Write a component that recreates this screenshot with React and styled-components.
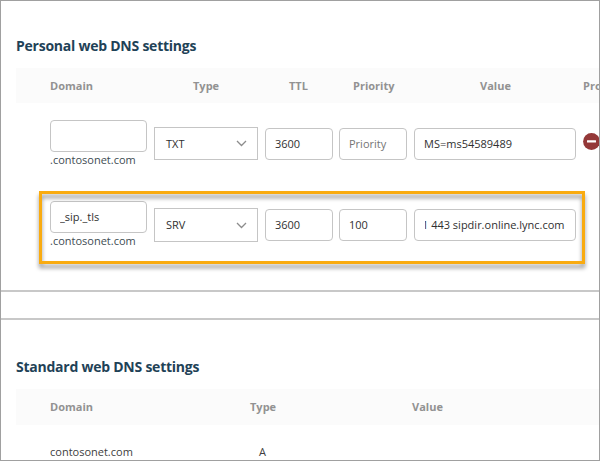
import React from "react";
import styled, { createGlobalStyle } from "styled-components";

const GlobalStyle = createGlobalStyle`
  * { box-sizing: border-box; }
  body { margin: 0; background: #fff; }
`;

const Frame = styled.main`
  width: 600px;
  height: 461px;
  overflow: hidden;
  border: 1px solid #a0a0a0;
  background: #fff;
  color: #404040;
  font: 12px/16px "Open Sans", sans-serif;
`;

const PersonalSection = styled.section`
  position: relative;
  height: 291px;
  padding: 35px 0 0 15px;
  border-bottom: 2px solid #c8c8c8;
`;

const StandardSection = styled.section`
  margin-top: 26px;
  padding: 37px 0 0 15px;
  border-top: 2px solid #c8c8c8;
`;

const Title = styled.h2`
  margin: 0;
  height: 20px;
  color: #1f4257;
  font-size: 14px;
  font-weight: 700;
  line-height: 20px;
  letter-spacing: -0.24px;
  white-space: nowrap;
`;

const Header = styled.div`
  display: grid;
  grid-template-columns: ${(p) => p.$columns};
  align-items: center;
  height: ${(p) => p.$height};
  margin-top: 12px;
  padding-left: 34px;
  background: #fbfbfb;
  color: #929292;
  font-size: 11px;
  font-weight: 700;
  white-space: nowrap;
`;

const RecordRow = styled.div`
  display: grid;
  grid-template-columns: 97px 104px 68px 67px 162px 17px;
  column-gap: 7px;
  align-items: start;
  height: 81px;
  padding-left: 34px;
`;

const Records = styled.div`
  padding-top: 17px;
`;

const DomainCell = styled.div`
  color: #404c52;
  font-size: 11px;
  line-height: 16px;
`;

const Field = styled.input`
  display: block;
  width: ${(p) => p.$width || "100%"};
  height: 32px;
  margin-top: ${(p) => p.$drop || "0"};
  margin-left: ${(p) => p.$shift || "0"};
  padding: 0 9px 2px;
  border: 1px solid #c5c5c5;
  border-radius: 4px;
  background: #fff;
  color: #303030;
  font: 11px "Open Sans", sans-serif;
  outline: 0;
  &::placeholder { color: #757575; opacity: 1; }
`;

const ScrolledField = styled(Field)`
  padding-left: 10px;
  text-indent: -3px;
`;

const Select = styled.div`
  display: flex;
  align-items: center;
  justify-content: space-between;
  height: ${(p) => p.$height};
  margin-top: 7px;
  padding: 0 10px 0 11px;
  border: 1px solid #c5c5c5;
  color: #303030;
  font-size: 11px;
`;

const RemoveButton = styled.button`
  width: 17px;
  height: 17px;
  margin-top: 13px;
  padding: 0;
  border: 0;
  background: none;
  svg { display: block; }
`;

const Highlight = styled.div`
  position: absolute;
  left: 38px;
  top: 190px;
  width: 546px;
  height: 73px;
  border: 3px solid #f9ab10;
  filter: drop-shadow(0 4px 2px rgba(0, 0, 0, 0.42));
  pointer-events: none;
`;

const StandardRow = styled.div`
  display: grid;
  grid-template-columns: 209px 1fr;
  padding: 19px 0 0 34px;
  color: #404040;
  font-size: 11px;
`;

const Chevron = () => (
  <svg width="11" height="7" viewBox="0 0 11 7" fill="none">
    <path d="M1 1l4.5 4.5L10 1" stroke="#8c8c8c" strokeWidth="1.3" />
  </svg>
);

const MinusIcon = () => (
  <svg width="17" height="17" viewBox="0 0 17 17">
    <circle cx="8.5" cy="8.5" r="8.4" fill="#943838" />
    <rect x="4" y="7.2" width="9" height="2.4" rx="0.4" fill="#fff" />
  </svg>
);

function Record({ domain, type, ttl, priority, value, scrolled, selectHeight, removable }) {
  const ValueField = scrolled ? ScrolledField : Field;
  return (
    <RecordRow>
      <DomainCell>
        <Field defaultValue={domain} aria-label="Domain" />
        .contosonet.com
      </DomainCell>
      <Select $height={selectHeight}>
        {type}
        <Chevron />
      </Select>
      <Field $drop="8px" defaultValue={ttl} aria-label="TTL" />
      <Field
        $drop="8px"
        $shift="-1px"
        $width="68px"
        defaultValue={priority}
        placeholder="Priority"
      />
      <ValueField $drop="8px" defaultValue={value} aria-label="Value" />
      {removable && (
        <RemoveButton aria-label="Remove record">
          <MinusIcon />
        </RemoveButton>
      )}
    </RecordRow>
  );
}

export default function App() {
  return (
    <>
      <GlobalStyle />
      <Frame>
        <PersonalSection>
          <Title>Personal web DNS settings</Title>
          <Header $columns="143px 96px 64px 127px 103px 1fr" $height="35px">
            <span>Domain</span>
            <span>Type</span>
            <span>TTL</span>
            <span>Priority</span>
            <span>Value</span>
            <span>Pro</span>
          </Header>
          <Records>
            <Record type="TXT" domain="" ttl="3600" value="MS=ms54589489" selectHeight="33px" removable />
            <Record
              type="SRV"
              domain="_sip._tls"
              ttl="3600"
              priority="100"
              value="1 443 sipdir.online.lync.com"
              scrolled
              selectHeight="34px"
            />
          </Records>
          <Highlight />
        </PersonalSection>
        <StandardSection>
          <Title>Standard web DNS settings</Title>
          <Header $columns="200px 162px 1fr" $height="36px">
            <span>Domain</span>
            <span>Type</span>
            <span>Value</span>
          </Header>
          <StandardRow>
            <span>contosonet.com</span>
            <span>A</span>
          </StandardRow>
        </StandardSection>
      </Frame>
    </>
  );
}
